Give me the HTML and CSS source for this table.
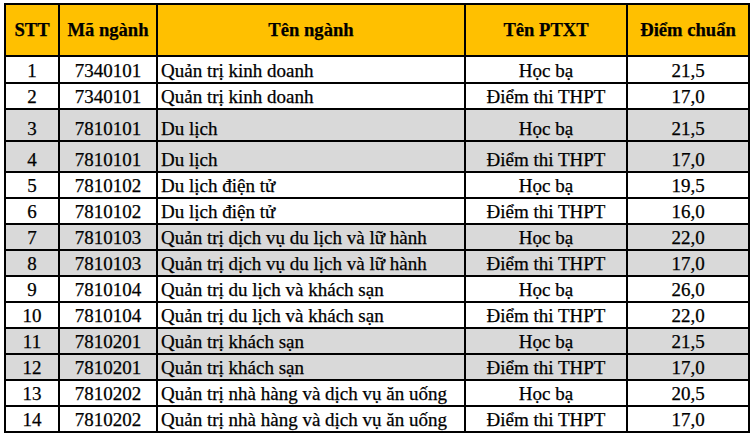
FILE: index.html
```html
<!DOCTYPE html>
<html>
<head>
<meta charset="utf-8">
<title>Điểm chuẩn</title>
<link rel="stylesheet" href="styles.css">
</head>
<body>
<div class="sheet">
<table class="scores">
  <colgroup>
    <col class="c-stt"><col class="c-ma"><col class="c-ten"><col class="c-pt"><col class="c-diem">
  </colgroup>
  <thead>
    <tr class="head">
      <th>STT</th><th>Mã ngành</th><th>Tên ngành</th><th>Tên PTXT</th><th>Điểm chuẩn</th>
    </tr>
  </thead>
  <tbody>
    <tr class="r27"><td>1</td><td>7340101</td><td class="name">Quản trị kinh doanh</td><td>Học bạ</td><td>21,5</td></tr>
    <tr><td>2</td><td>7340101</td><td class="name">Quản trị kinh doanh</td><td>Điểm thi THPT</td><td>17,0</td></tr>
    <tr class="gray r32"><td>3</td><td>7810101</td><td class="name">Du lịch</td><td>Học bạ</td><td>21,5</td></tr>
    <tr class="gray r31"><td>4</td><td>7810101</td><td class="name">Du lịch</td><td>Điểm thi THPT</td><td>17,0</td></tr>
    <tr><td>5</td><td>7810102</td><td class="name">Du lịch điện tử</td><td>Học bạ</td><td>19,5</td></tr>
    <tr><td>6</td><td>7810102</td><td class="name">Du lịch điện tử</td><td>Điểm thi THPT</td><td>16,0</td></tr>
    <tr class="gray"><td>7</td><td>7810103</td><td class="name">Quản trị dịch vụ du lịch và lữ hành</td><td>Học bạ</td><td>22,0</td></tr>
    <tr class="gray"><td>8</td><td>7810103</td><td class="name">Quản trị dịch vụ du lịch và lữ hành</td><td>Điểm thi THPT</td><td>17,0</td></tr>
    <tr><td>9</td><td>7810104</td><td class="name">Quản trị du lịch và khách sạn</td><td>Học bạ</td><td>26,0</td></tr>
    <tr><td>10</td><td>7810104</td><td class="name">Quản trị du lịch và khách sạn</td><td>Điểm thi THPT</td><td>22,0</td></tr>
    <tr class="gray"><td>11</td><td>7810201</td><td class="name">Quản trị khách sạn</td><td>Học bạ</td><td>21,5</td></tr>
    <tr class="gray"><td>12</td><td>7810201</td><td class="name">Quản trị khách sạn</td><td>Điểm thi THPT</td><td>17,0</td></tr>
    <tr><td>13</td><td>7810202</td><td class="name">Quản trị nhà hàng và dịch vụ ăn uống</td><td>Học bạ</td><td>20,5</td></tr>
    <tr><td>14</td><td>7810202</td><td class="name">Quản trị nhà hàng và dịch vụ ăn uống</td><td>Điểm thi THPT</td><td>17,0</td></tr>
  </tbody>
</table>
</div>
</body>
</html>
```

FILE: styles.css
```css
html, body {
  margin: 0;
  padding: 0;
  background: #ffffff;
}

.sheet {
  padding: 3px 0 0 4px;
}

.scores {
  border-collapse: separate;
  border-spacing: 0;
  table-layout: fixed;
  width: 746px;
  border-top: 2px solid #000;
  border-left: 2px solid #000;
  font-family: "Liberation Serif", "Times New Roman", serif;
  font-size: 19px;
  color: #000;
}

.c-stt { width: 54px; }
.c-ma { width: 98px; }
.c-ten { width: 308px; }
.c-pt { width: 162px; }
.c-diem { width: 122px; }

.scores th,
.scores td {
  box-sizing: border-box;
  border-right: 2px solid #000;
  border-bottom: 2px solid #000;
  padding: 0 2px;
  text-align: center;
  white-space: nowrap;
  overflow: hidden;
  font-family: "Liberation Serif", "Times New Roman", serif;
  -webkit-text-stroke: 0.25px #000;
}

.scores th {
  height: 52px;
  background: #ffc000;
  font-weight: bold;
  font-size: 18.6px;
  vertical-align: middle;
  line-height: 22px;
}

.scores td {
  height: 26px;
  vertical-align: bottom;
  line-height: 22px;
  padding-bottom: 0;
}

.scores td.name {
  text-align: left;
  padding-left: 3px;
}

.scores tr.r27 td { height: 27px; }
.scores tr.r32 td { height: 32px; }
.scores tr.r31 td { height: 31px; }

.scores tr.gray td {
  background: #d9d9d9;
}
```
